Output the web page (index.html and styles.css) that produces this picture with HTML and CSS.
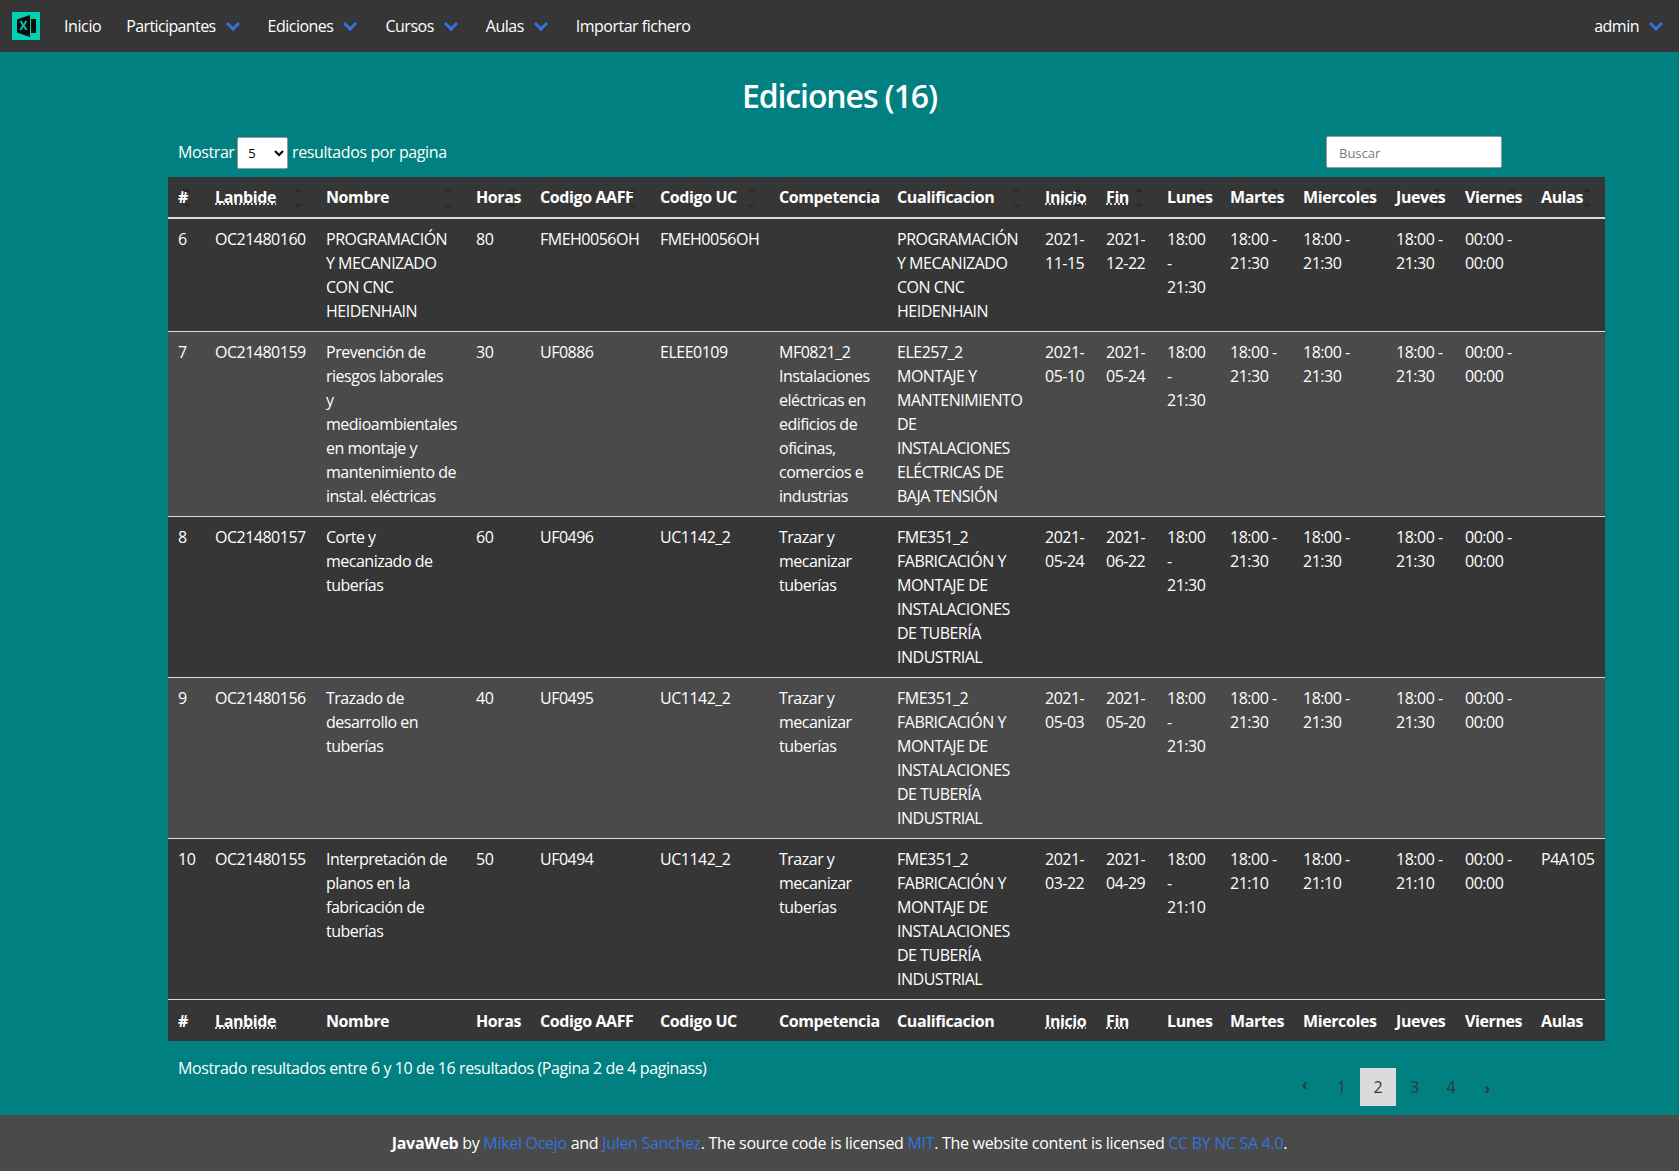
FILE: index.html
```html
<!doctype html>
<html>
<head>
<meta name="viewport" content="width=device-width, initial-scale=1">
<title>Ediciones</title>
<link rel="stylesheet" href="styles.css">
</head>
<body>
    <nav class="navbar">
        <a class="logo" href="#">
            <svg width="28" height="28" viewBox="0 0 28 28">
                <rect width="28" height="28" fill="#00d1b2"/>
                <path d="M5 7.5 18 3v22L5 20.500z" fill="#0a0a0a"/>
                <path d="M19 7h5v14h-5z" fill="#0a0a0a"/>
                <text x="11.500" y="18" class="logo-x">X</text>
            </svg>
        </a>
        <a class="nav-item nav-home" href="#">Inicio</a>
        <a class="nav-item has-arrow nav-long" href="#">Participantes</a>
        <a class="nav-item has-arrow" href="#">Ediciones</a>
        <a class="nav-item has-arrow" href="#">Cursos</a>
        <a class="nav-item has-arrow" href="#">Aulas</a>
        <a class="nav-item" href="#">Importar fichero</a>
        <a class="nav-item has-arrow nav-end" href="#">admin</a>
    </nav>
    <main id="main">
        <h1>Ediciones (16)</h1>
        <div class="controls">
            <label class="page-size">Mostrar
                <select><option>5</option><option>10</option><option>25</option></select>
                resultados por pagina</label>
            <input class="search" type="text" placeholder="Buscar">
        </div>
        <table>
            <thead>
                <tr>
                    <th class="c-num sort">#</th>
                    <th class="c-lan sort"><abbr title="Lanbide">Lanbide</abbr></th>
                    <th class="c-nom sort">Nombre</th>
                    <th class="c-hor sort">Horas</th>
                    <th class="c-aaf sort">Codigo AAFF</th>
                    <th class="c-cuc sort">Codigo UC</th>
                    <th class="c-com sort">Competencia</th>
                    <th class="c-cua sort">Cualificacion</th>
                    <th class="c-ini sort"><abbr title="Inicio">Inicio</abbr></th>
                    <th class="c-fin sort"><abbr title="Fin">Fin</abbr></th>
                    <th class="c-lun sort">Lunes</th>
                    <th class="c-mar sort">Martes</th>
                    <th class="c-mie sort">Miercoles</th>
                    <th class="c-jue sort">Jueves</th>
                    <th class="c-vie sort">Viernes</th>
                    <th class="c-aul sort">Aulas</th>
                </tr>
            </thead>
            <tbody>
                <tr>
                    <td>6</td><td>OC21480160</td>
                    <td>PROGRAMACIÓN Y MECANIZADO CON CNC HEIDENHAIN</td>
                    <td>80</td><td>FMEH0056OH</td><td>FMEH0056OH</td><td></td>
                    <td>PROGRAMACIÓN Y MECANIZADO CON CNC HEIDENHAIN</td>
                    <td>2021-11-15</td><td>2021-12-22</td>
                    <td>18:00 - 21:30</td><td>18:00 - 21:30</td><td>18:00 - 21:30</td><td>18:00 - 21:30</td><td>00:00 - 00:00</td><td></td>
                </tr>
                <tr>
                    <td>7</td><td>OC21480159</td>
                    <td>Prevención de riesgos laborales<br>y medioambientales en montaje y mantenimiento&nbsp;de instal. eléctricas</td>
                    <td>30</td><td>UF0886</td><td>ELEE0109</td>
                    <td>MF0821_2 Instalaciones eléctricas en edificios de oficinas, comercios e industrias</td>
                    <td>ELE257_2 MONTAJE Y MANTENIMIENTO DE INSTALACIONES ELÉCTRICAS DE BAJA TENSIÓN</td>
                    <td>2021-05-10</td><td>2021-05-24</td>
                    <td>18:00 - 21:30</td><td>18:00 - 21:30</td><td>18:00 - 21:30</td><td>18:00 - 21:30</td><td>00:00 - 00:00</td><td></td>
                </tr>
                <tr>
                    <td>8</td><td>OC21480157</td>
                    <td>Corte y mecanizado de tuberías</td>
                    <td>60</td><td>UF0496</td><td>UC1142_2</td>
                    <td>Trazar y mecanizar tuberías</td>
                    <td>FME351_2 FABRICACIÓN Y MONTAJE DE INSTALACIONES DE TUBERÍA INDUSTRIAL</td>
                    <td>2021-05-24</td><td>2021-06-22</td>
                    <td>18:00 - 21:30</td><td>18:00 - 21:30</td><td>18:00 - 21:30</td><td>18:00 - 21:30</td><td>00:00 - 00:00</td><td></td>
                </tr>
                <tr>
                    <td>9</td><td>OC21480156</td>
                    <td>Trazado de desarrollo en tuberías</td>
                    <td>40</td><td>UF0495</td><td>UC1142_2</td>
                    <td>Trazar y mecanizar tuberías</td>
                    <td>FME351_2 FABRICACIÓN Y MONTAJE DE INSTALACIONES DE TUBERÍA INDUSTRIAL</td>
                    <td>2021-05-03</td><td>2021-05-20</td>
                    <td>18:00 - 21:30</td><td>18:00 - 21:30</td><td>18:00 - 21:30</td><td>18:00 - 21:30</td><td>00:00 - 00:00</td><td></td>
                </tr>
                <tr>
                    <td>10</td><td>OC21480155</td>
                    <td>Interpretación de planos en la fabricación de tuberías</td>
                    <td>50</td><td>UF0494</td><td>UC1142_2</td>
                    <td>Trazar y mecanizar tuberías</td>
                    <td>FME351_2 FABRICACIÓN Y MONTAJE DE INSTALACIONES DE TUBERÍA INDUSTRIAL</td>
                    <td>2021-03-22</td><td>2021-04-29</td>
                    <td>18:00 - 21:10</td><td>18:00 - 21:10</td><td>18:00 - 21:10</td><td>18:00 - 21:10</td><td>00:00 - 00:00</td><td>P4A105</td>
                </tr>
            </tbody>
            <tfoot>
                <tr>
                    <th>#</th>
                    <th><abbr title="Lanbide">Lanbide</abbr></th>
                    <th>Nombre</th>
                    <th>Horas</th>
                    <th>Codigo AAFF</th>
                    <th>Codigo UC</th>
                    <th>Competencia</th>
                    <th>Cualificacion</th>
                    <th><abbr title="Inicio">Inicio</abbr></th>
                    <th><abbr title="Fin">Fin</abbr></th>
                    <th>Lunes</th>
                    <th>Martes</th>
                    <th>Miercoles</th>
                    <th>Jueves</th>
                    <th>Viernes</th>
                    <th>Aulas</th>
                </tr>
            </tfoot>
        </table>
        <div class="table-end">
            <p class="info">Mostrado resultados entre 6 y 10 de 16 resultados (Pagina 2 de 4 paginass)</p>
            <ul class="pager">
                <li class="prev"><a href="#">‹</a></li>
                <li><a href="#">1</a></li>
                <li class="current"><a href="#">2</a></li>
                <li><a href="#">3</a></li>
                <li><a href="#">4</a></li>
                <li class="next"><a href="#">›</a></li>
            </ul>
        </div>
    </main>
    <footer>
        <p><strong>JavaWeb</strong> by <a href="#">Mikel Ocejo</a> and <a href="#">Julen Sanchez</a>. The source code is licensed <a href="#">MIT</a>. The website content is licensed <a href="#">CC BY NC SA 4.0</a>.</p>
    </footer>
</body>
</html>
```

FILE: styles.css
```css
html, body {
    margin: 0;
    padding: 0;
    background: #008080;
    color: #fff;
    font-family: "Open Sans", "Liberation Sans", sans-serif;
    font-size: 16px;
    line-height: 24px;
    letter-spacing: -0.4px;
}
a {
    color: #3273dc;
    text-decoration: none;
}
p, h1, ul {
    margin: 0;
    padding: 0;
}

/* top bar */
.navbar {
    display: flex;
    align-items: center;
    height: 52px;
    background: #363636;
    letter-spacing: -0.5px;
}
.logo {
    display: flex;
    padding: 0 12px;
}
.logo-x {
    font-family: "Open Sans", sans-serif;
    font-size: 12px;
    font-weight: 700;
    letter-spacing: 0;
    text-anchor: middle;
    fill: #00d1b2;
}
.nav-item {
    position: relative;
    display: block;
    padding: 14px 12px;
    color: #fff;
}
.nav-home {
    padding-right: 13px;
    letter-spacing: -0.4px;
}
.nav-long {
    letter-spacing: -0.62px;
}
.has-arrow {
    padding-right: 40px;
}
.has-arrow::after {
    content: "";
    position: absolute;
    top: 50%;
    right: 18px;
    width: 7px;
    height: 7px;
    margin-top: -7px;
    border: 3px solid #3273dc;
    border-top: 0;
    border-right: 0;
    transform: rotate(-45deg);
}
.nav-end {
    margin-left: auto;
}

#main {
    padding-top: 26px;
}
h1 {
    font-size: 32px;
    line-height: 36px;
    font-weight: 600;
    text-align: center;
    letter-spacing: -1.1px;
}
.controls {
    display: flex;
    justify-content: space-between;
    align-items: center;
    height: 32px;
    margin: 22px 168px 9px;
    padding: 0 9px 0 10px;
}
.page-size {
    padding-top: 1px;
}
select {
    width: 51px;
    height: 32px;
    margin: 0 0 0 -1px;
    padding-left: 6px;
    border: 1px solid #999;
    border-radius: 2px;
    background: #fff;
    font-family: inherit;
    font-size: 13px;
}
.search {
    box-sizing: border-box;
    width: 176px;
    height: 32px;
    padding: 2px 12px 0;
    border: 1px solid #999;
    border-radius: 2px;
    font-family: inherit;
    font-size: 13px;
}
.search::placeholder {
    color: #7a7a7a;
}

/* table runs past the right edge of its column, same as the original */
table {
    table-layout: fixed;
    width: 1437px;
    margin-left: 168px;
    border-collapse: collapse;
    background: #363636;
}
th, td {
    box-sizing: border-box;
    padding: 8px 10px;
    text-align: left;
    vertical-align: top;
}
th {
    font-weight: 700;
}
thead th {
    border-bottom: 2px solid #dbdbdb;
}
tfoot th {
    padding-top: 9px;
}
td {
    border-bottom: 1px solid #dbdbdb;
    letter-spacing: -0.5px;
}
tbody tr:nth-child(even) {
    background: #4a4a4a;
}
abbr {
    text-decoration: underline dotted;
}
.sort {
    position: relative;
}
.sort::before, .sort::after {
    content: "";
    position: absolute;
    right: 14px;
    border-left: 4px solid transparent;
    border-right: 4px solid transparent;
}
.sort::before {
    top: 11px;
    border-bottom: 4px solid #2b2b2b;
}
.sort::after {
    top: 27px;
    border-top: 4px solid #2b2b2b;
}
.c-num { width: 37px; }
.c-lan { width: 111px; }
.c-nom { width: 150px; }
.c-hor { width: 64px; }
.c-aaf { width: 120px; }
.c-cuc { width: 119px; }
.c-com { width: 118px; }
.c-cua { width: 148px; }
.c-ini { width: 61px; }
.c-fin { width: 61px; }
.c-lun { width: 63px; }
.c-mar { width: 73px; }
.c-mie { width: 93px; }
.c-jue { width: 69px; }
.c-vie { width: 76px; }
.c-aul { width: 74px; }

.table-end {
    display: flex;
    justify-content: space-between;
    height: 74px;
    margin: 0 168px;
    padding: 15px 6px 0 10px;
    box-sizing: border-box;
}
.pager {
    display: flex;
    gap: 1px;
    height: 38px;
    margin-top: 12px;
    list-style: none;
}
.pager a {
    display: flex;
    justify-content: center;
    align-items: center;
    width: 35.500px;
    height: 38px;
    color: #363636;
}
.pager .current a {
    background: #dbdbdb;
}
.pager .prev a, .pager .next a {
    box-sizing: border-box;
    font-weight: 700;
}
.pager .prev a {
    padding-bottom: 6px;
}
.pager .next a {
    padding-top: 1px;
}

footer {
    display: flex;
    justify-content: center;
    align-items: center;
    height: 56px;
    background: #4a4a4a;
    letter-spacing: -0.3px;
}
```
